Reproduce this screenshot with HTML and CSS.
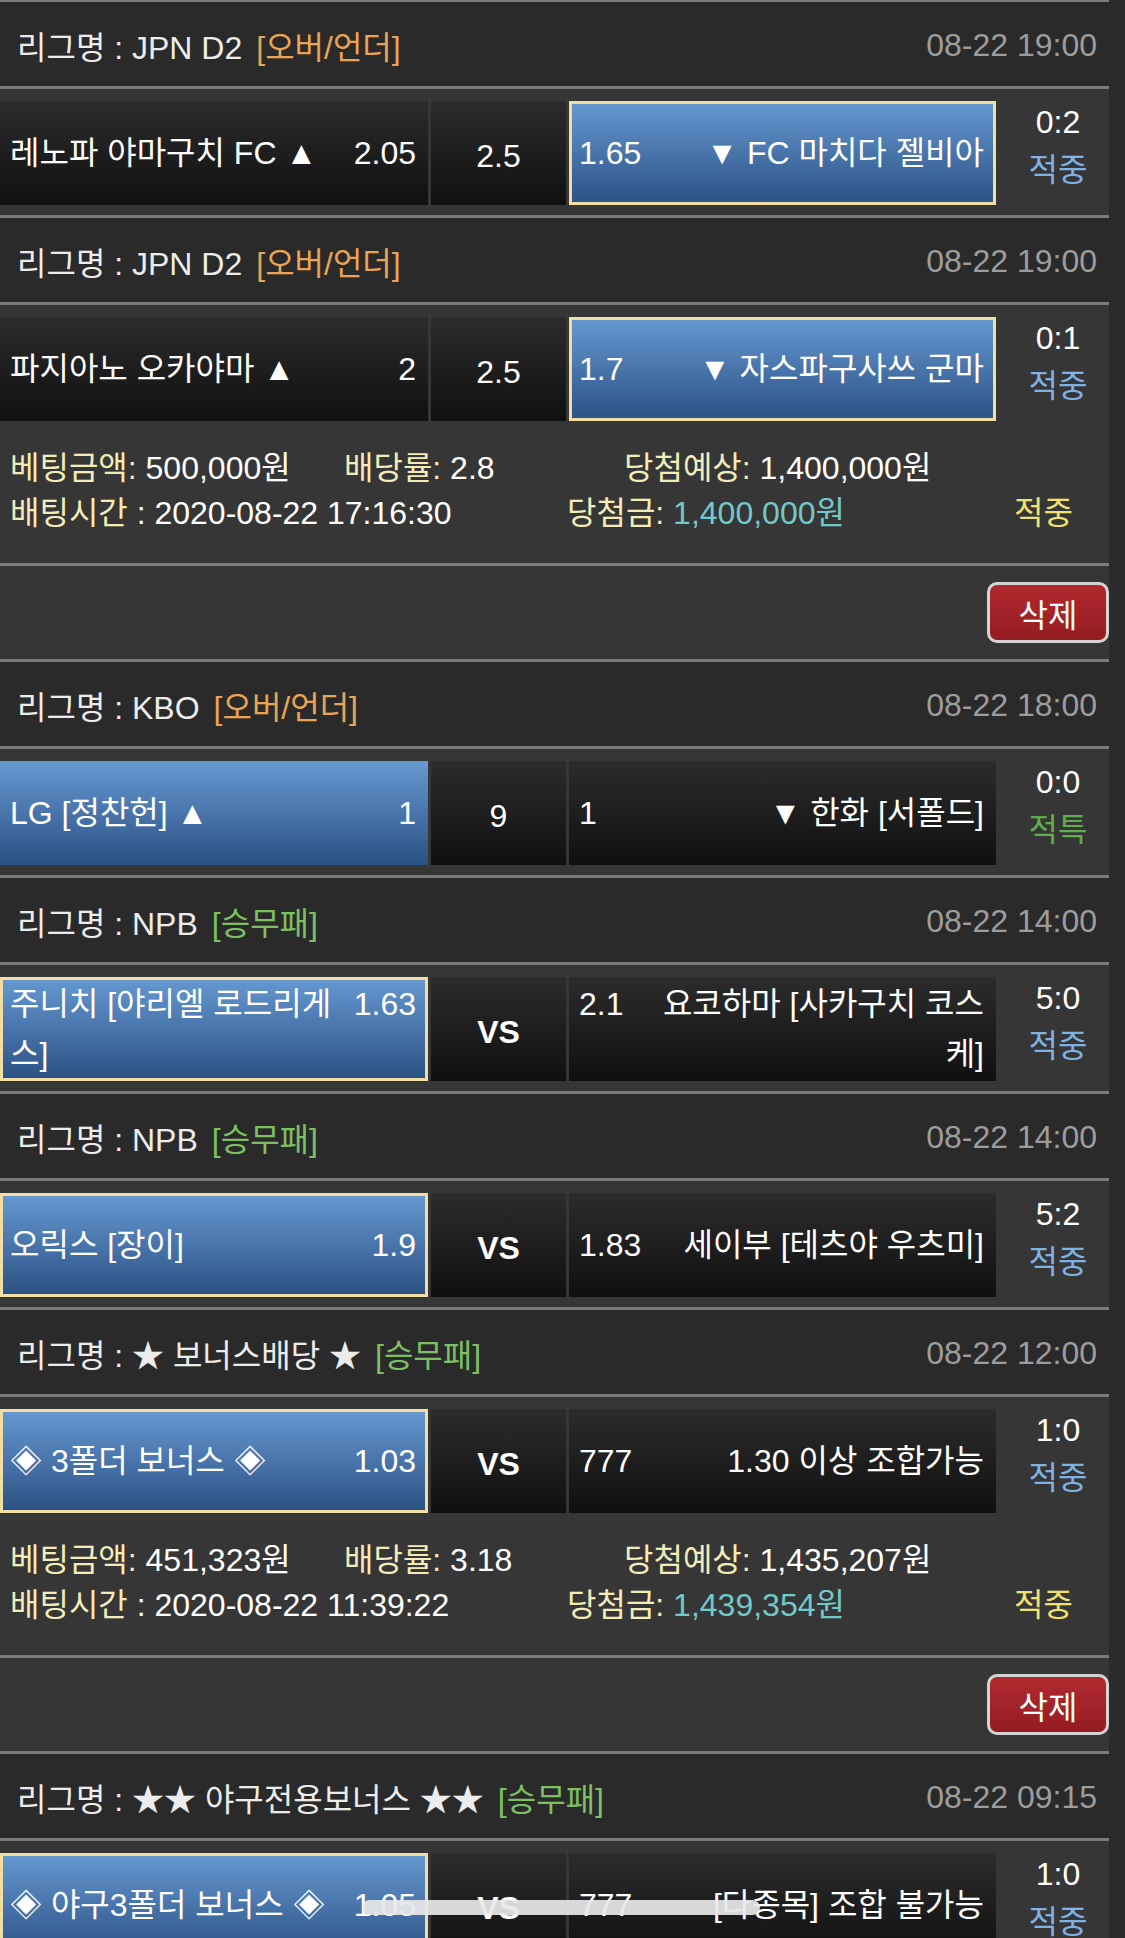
FILE: index.html
```html
<!DOCTYPE html>
<html lang="ko">
<head>
<meta charset="utf-8">
<title>배팅내역</title>
<link rel="stylesheet" href="styles.css">
</head>
<body>
<div class="page">

  <div class="game">
    <div class="league"><span class="lname">리그명 : JPN D2</span><span class="tag ou">[오버/언더]</span><span class="date">08-22 19:00</span></div>
    <div class="match">
      <div class="cell home"><div class="in"><span class="odd">2.05</span><span class="nm">레노파 야마구치 FC ▲</span></div></div>
      <div class="cell mid">2.5</div>
      <div class="cell away blue sel"><div class="in"><span class="odd">1.65</span><span class="nm">▼ FC 마치다 젤비아</span></div></div>
      <div class="result"><span class="score">0:2</span><span class="st hit">적중</span></div>
    </div>
  </div>

  <div class="game">
    <div class="league"><span class="lname">리그명 : JPN D2</span><span class="tag ou">[오버/언더]</span><span class="date">08-22 19:00</span></div>
    <div class="match">
      <div class="cell home"><div class="in"><span class="odd">2</span><span class="nm">파지아노 오카야마 ▲</span></div></div>
      <div class="cell mid">2.5</div>
      <div class="cell away blue sel"><div class="in"><span class="odd">1.7</span><span class="nm">▼ 자스파구사쓰 군마</span></div></div>
      <div class="result"><span class="score">0:1</span><span class="st hit">적중</span></div>
    </div>
  </div>

  <div class="summary">
    <div class="line l1"><span><span class="lbl">베팅금액:</span> 500,000원</span><span><span class="lbl">배당률:</span> 2.8</span><span><span class="lbl">당첨예상:</span> 1,400,000원</span></div>
    <div class="line l2"><span><span class="lbl">배팅시간</span> : 2020-08-22 17:16:30</span><span><span class="lbl">당첨금:</span> <span class="won">1,400,000원</span></span><span class="lbl win">적중</span></div>
  </div>
  <div class="actions"><button class="del" type="button">삭제</button></div>

  <div class="game">
    <div class="league"><span class="lname">리그명 : KBO</span><span class="tag ou">[오버/언더]</span><span class="date">08-22 18:00</span></div>
    <div class="match">
      <div class="cell home blue"><div class="in"><span class="odd">1</span><span class="nm">LG [정찬헌] ▲</span></div></div>
      <div class="cell mid">9</div>
      <div class="cell away"><div class="in"><span class="odd">1</span><span class="nm">▼ 한화 [서폴드]</span></div></div>
      <div class="result"><span class="score">0:0</span><span class="st special">적특</span></div>
    </div>
  </div>

  <div class="game">
    <div class="league"><span class="lname">리그명 : NPB</span><span class="tag wdl">[승무패]</span><span class="date">08-22 14:00</span></div>
    <div class="match">
      <div class="cell home blue sel"><div class="in"><span class="odd">1.63</span><span class="nm">주니치 [야리엘 로드리게스]</span></div></div>
      <div class="cell mid vs">VS</div>
      <div class="cell away"><div class="in"><span class="odd">2.1</span><span class="nm">요코하마 [사카구치 코스케]</span></div></div>
      <div class="result"><span class="score">5:0</span><span class="st hit">적중</span></div>
    </div>
  </div>

  <div class="game">
    <div class="league"><span class="lname">리그명 : NPB</span><span class="tag wdl">[승무패]</span><span class="date">08-22 14:00</span></div>
    <div class="match">
      <div class="cell home blue sel"><div class="in"><span class="odd">1.9</span><span class="nm">오릭스 [장이]</span></div></div>
      <div class="cell mid vs">VS</div>
      <div class="cell away"><div class="in"><span class="odd">1.83</span><span class="nm">세이부 [테츠야 우츠미]</span></div></div>
      <div class="result"><span class="score">5:2</span><span class="st hit">적중</span></div>
    </div>
  </div>

  <div class="game">
    <div class="league"><span class="lname">리그명 : ★ 보너스배당 ★</span><span class="tag wdl">[승무패]</span><span class="date">08-22 12:00</span></div>
    <div class="match">
      <div class="cell home blue sel"><div class="in"><span class="odd">1.03</span><span class="nm">◈ 3폴더 보너스 ◈</span></div></div>
      <div class="cell mid vs">VS</div>
      <div class="cell away"><div class="in"><span class="odd">777</span><span class="nm">1.30 이상 조합가능</span></div></div>
      <div class="result"><span class="score">1:0</span><span class="st hit">적중</span></div>
    </div>
  </div>

  <div class="summary">
    <div class="line l1"><span><span class="lbl">베팅금액:</span> 451,323원</span><span><span class="lbl">배당률:</span> 3.18</span><span><span class="lbl">당첨예상:</span> 1,435,207원</span></div>
    <div class="line l2"><span><span class="lbl">배팅시간</span> : 2020-08-22 11:39:22</span><span><span class="lbl">당첨금:</span> <span class="won">1,439,354원</span></span><span class="lbl win">적중</span></div>
  </div>
  <div class="actions"><button class="del" type="button">삭제</button></div>

  <div class="game">
    <div class="league"><span class="lname">리그명 : ★★ 야구전용보너스 ★★</span><span class="tag wdl">[승무패]</span><span class="date">08-22 09:15</span></div>
    <div class="match">
      <div class="cell home blue sel"><div class="in"><span class="odd">1.05</span><span class="nm">◈ 야구3폴더 보너스 ◈</span></div></div>
      <div class="cell mid vs">VS</div>
      <div class="cell away"><div class="in"><span class="odd">777</span><span class="nm">[다종목] 조합 불가능</span></div></div>
      <div class="result"><span class="score">1:0</span><span class="st hit">적중</span></div>
    </div>
  </div>

</div>
<div class="home-indicator"></div>
</body>
</html>
```

FILE: styles.css
```css
html, body {
  margin: 0;
  padding: 0;
}

body {
  background: #2b2b2b;
  font-family: "Liberation Sans", "Noto Sans CJK KR", sans-serif;
  font-size: 32px;
  color: #f2f2f2;
}

.page {
  width: 1109px;
  background: #363636;
  margin-top: -1px;
  padding-bottom: 40px;
}

/* league header */
.league {
  box-sizing: border-box;
  display: flex;
  align-items: center;
  height: 90px;
  padding: 2px 12px 0 17px;
  background: #2a2a2a;
  border-top: 3px solid #7b7b7b;
  border-bottom: 3px solid #7b7b7b;
  color: #ececec;
  white-space: nowrap;
}

.tag {
  margin-left: 14px;
}

.tag.ou {
  color: #e9a456;
}

.tag.wdl {
  color: #7cc063;
}

.date {
  margin-left: auto;
  color: #9d9d9d;
}

/* match row */
.match {
  display: flex;
  gap: 3px;
  height: 104px;
  margin: 12px 0 10px;
}

.cell {
  box-sizing: border-box;
  display: flex;
  align-items: center;
  background: linear-gradient(to bottom, #2c2c2c 0%, #101010 100%);
  color: #fff;
  line-height: 50px;
}

.cell.blue {
  background: linear-gradient(to bottom, #6699d2 0%, #2b5083 100%);
}

.cell.sel {
  box-shadow: inset 0 0 0 3px #f1dea4;
}

.cell .in {
  width: 100%;
}

.home {
  width: 428px;
  flex: none;
  padding: 0 12px 0 10px;
  text-align: left;
}

.home .odd {
  float: right;
  margin-left: 4px;
}

.away {
  width: 427px;
  flex: none;
  padding: 0 12px 0 10px;
  text-align: right;
}

.away .odd {
  float: left;
  margin-right: 24px;
}

.mid {
  width: 135px;
  flex: none;
  justify-content: center;
  padding-top: 6px;
}

.mid.vs {
  font-weight: bold;
}

.result {
  box-sizing: border-box;
  flex: 1;
  display: flex;
  flex-direction: column;
  justify-content: center;
  align-items: center;
  padding: 0 0 14px 8px;
  line-height: 48px;
}

.score {
  color: #fff;
}

.st.hit {
  color: #7fb1e3;
}

.st.special {
  color: #5fae4c;
}

/* summary */
.summary {
  box-sizing: border-box;
  height: 135px;
  padding: 15px 0 0 10px;
  border-bottom: 3px solid #7b7b7b;
  line-height: 45px;
  color: #fff;
  white-space: nowrap;
}

.line {
  display: grid;
}

.line.l1 {
  grid-template-columns: 334px 280px auto;
}

.line.l2 {
  grid-template-columns: 557px 447px auto;
}

.lbl {
  color: #f3ecb8;
}

.won {
  color: #72c9c9;
}

.lbl.win {
  color: #f1e26e;
}

/* actions */
.actions {
  display: flex;
  justify-content: flex-end;
  align-items: center;
  height: 93px;
}

.del {
  box-sizing: border-box;
  width: 122px;
  height: 61px;
  border: 3px solid #d4d4d4;
  border-radius: 10px;
  background: linear-gradient(to bottom, #b02a2f 0%, #951c21 100%);
  color: #fff;
  font-family: "Liberation Sans", "Noto Sans CJK KR", sans-serif;
  font-size: 32px;
  padding: 0;
}

.home-indicator {
  position: fixed;
  left: 362px;
  bottom: 23px;
  width: 398px;
  height: 15px;
  border-radius: 8px;
  background: rgba(232, 232, 232, 0.92);
}
```
